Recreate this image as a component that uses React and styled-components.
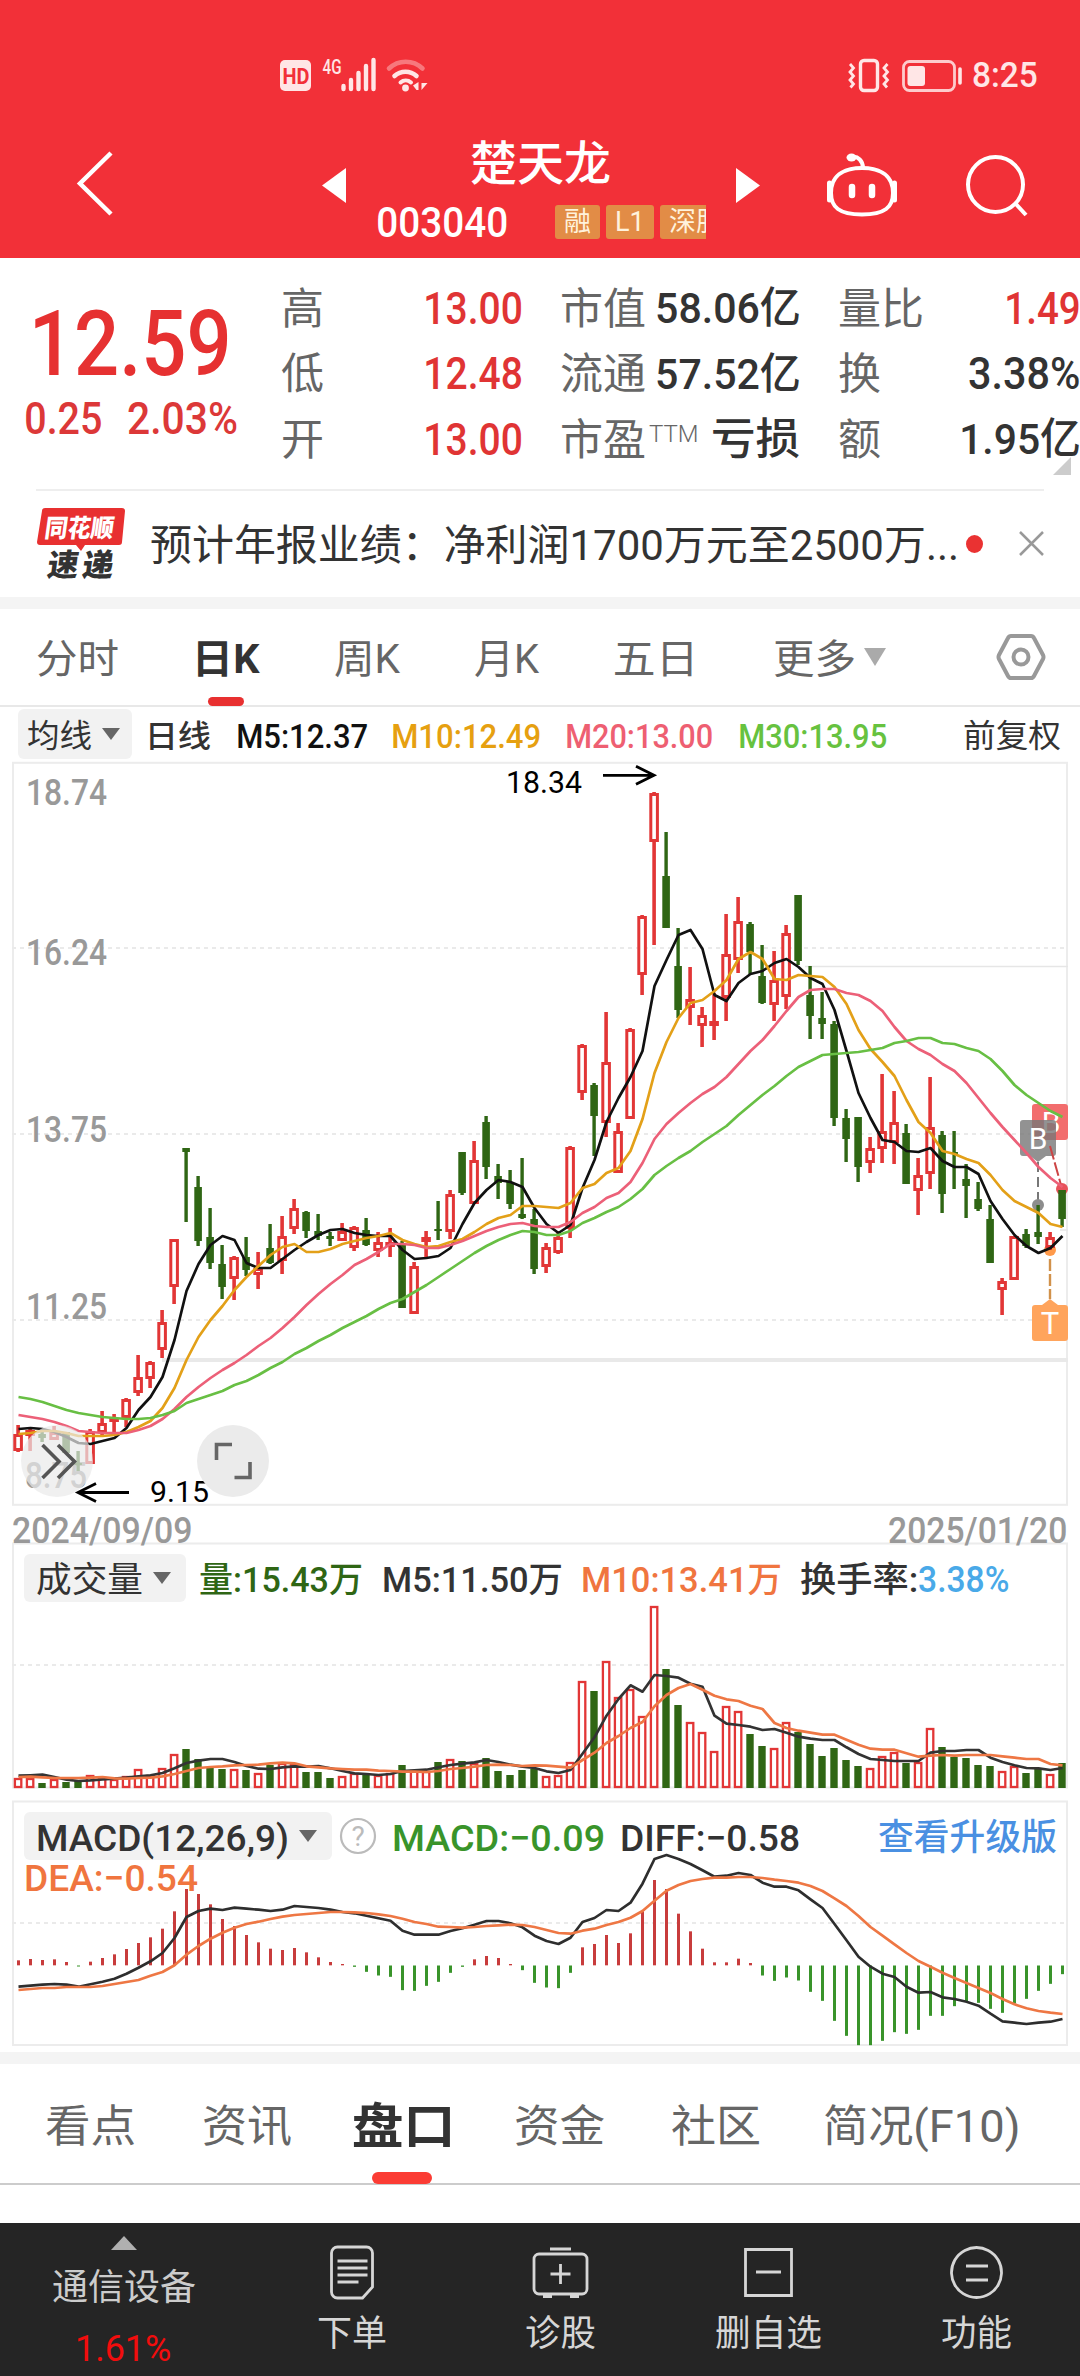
import React, { useLayoutEffect, useState } from "react";
import styled, { createGlobalStyle, css } from "styled-components";

const SANS = `Roboto, "Noto Sans CJK SC", sans-serif`;

const Global = createGlobalStyle`
  * { box-sizing: border-box; }
  body { margin: 0; background: #fff; font-family: ${SANS}; color: #333; }
  svg { display: block; flex: none; overflow: visible; }
`;

/* ---------- text that is fitted to an exact ink width ---------- */

const FitBox = styled.span`
  display: block;
  flex: none;
  width: ${(p) => p.$w}px;
  height: ${(p) => p.$size}px;
  line-height: ${(p) => p.$size}px;
  margin-left: ${(p) => p.$ml || 0}px;
  margin-top: ${(p) => p.$mt || 0}px;
  font-size: ${(p) => p.$size}px;
  font-weight: ${(p) => p.$weight || 400};
  color: ${(p) => p.$color || "inherit"};
  white-space: nowrap;
`;
const FitInner = styled.span`
  display: inline-block;
  transform-origin: 0 50%;
`;

function Fit({ w, size, weight = 400, color, ml, mt, dy = 1.5, children }) {
  const [m, setM] = useState({ scale: 1, shift: 0 });
  useLayoutEffect(() => {
    const ctx = document.createElement("canvas").getContext("2d");
    ctx.font = `${weight} ${size}px ${SANS}`;
    const t = ctx.measureText(children);
    const ink = t.actualBoundingBoxLeft + t.actualBoundingBoxRight;
    const scale = w / ink;
    setM({ scale, shift: t.actualBoundingBoxLeft * scale });
  }, [w, size, weight, children]);
  return (
    <FitBox $w={w} $size={size} $weight={weight} $color={color} $ml={ml} $mt={mt}>
      <FitInner style={{ transform: `translate(${m.shift}px, ${dy}px) scaleX(${m.scale})` }}>{children}</FitInner>
    </FitBox>
  );
}

/* ---------- header ---------- */

const Screen = styled.main`
  width: 1080px;
  height: 2376px;
  overflow: hidden;
  display: flex;
  flex-direction: column;
  background: #fff;
`;
const Header = styled.header`
  flex: none;
  height: 258px;
  background: #f23038;
  color: #fff;
  display: flex;
  flex-direction: column;
`;
const StatusBar = styled.div`
  height: 92px;
  padding: 58px 43px 0 280px;
  display: flex;
  color: #ffe6e6;
`;
const StatusGroup = styled.div`
  display: flex;
  align-items: flex-start;
  margin-left: ${(p) => (p.$end ? "auto" : 0)};
`;
const TitleBar = styled.div`
  flex: 1;
  display: flex;
  padding-left: 77px;
`;
const TitleIcon = styled.div`
  margin-left: ${(p) => p.$ml || 0}px;
  padding-top: ${(p) => p.$pt}px;
`;
const TitleCenter = styled.div`
  width: 390px;
  display: flex;
  flex-direction: column;
`;
const NameRow = styled.div`
  height: 88px;
  padding: 46px 0 0 125px;
  display: flex;
`;
const CodeRow = styled.div`
  display: flex;
  padding-left: 32px;
  height: 80px;
  padding-top: 20px;
`;
const Badges = styled.div`
  display: flex;
  gap: 6px;
  margin-left: 48px;
  margin-top: 5px;
  width: 151px;
  height: 34px;
  overflow: hidden;
`;
const Badge = styled.span`
  flex: none;
  width: ${(p) => p.$w}px;
  height: 34px;
  padding-left: 9px;
  border-radius: 3px;
  background: #e28c46;
  color: #fff2dc;
  font-size: 27px;
  line-height: 34px;
  white-space: nowrap;
`;

function StatusIcons() {
  return (
    <StatusGroup>
      <svg width="148" height="34" viewBox="280 58 148 34">
        <rect x="280" y="60" width="31" height="31" rx="5" fill="#ffe6e6" />
        <text x="282.500" y="84" fontSize="22" fontWeight="700" textLength="27" lengthAdjust="spacingAndGlyphs" fill="#f23038">HD</text>
        <text x="322.500" y="73.500" fontSize="21" fontWeight="500" textLength="19" lengthAdjust="spacingAndGlyphs" fill="#ffe6e6">4G</text>
        <g stroke="#ffe6e6" strokeWidth="4.4" strokeLinecap="round">
          <path d="M343.5 86v3M351 80v9M358.500 73v16M366 66v23M373.500 60v29" />
        </g>
        <g fill="none" strokeWidth="4.600" strokeLinecap="round" stroke="#ffe6e6">
          <path d="M389 68.500a24 24 0 0 1 33.500 0" opacity=".4" />
          <path d="M394.500 76a16.500 16.500 0 0 1 22 0" />
          <path d="M400.500 82.500a8 8 0 0 1 10.500 0" strokeWidth="4" />
        </g>
        <circle cx="405.500" cy="88" r="3.400" fill="#ffe6e6" />
        <path d="M418.500 82v8h-2l-3.500-4.500zM421.500 90v-7h6z" fill="#ffe6e6" />
      </svg>
    </StatusGroup>
  );
}

function StatusRight() {
  return (
    <StatusGroup $end>
      <svg width="116" height="34" viewBox="847 58 116 34" fill="none" stroke="#ffe6e6">
        <rect x="860.500" y="60.500" width="17" height="30" rx="3.500" strokeWidth="3.400" />
        <path d="M850 64l3.500 4-3.500 4 3.500 4-3.500 4 3.500 4-3 3.500M887.500 64l-3.500 4 3.500 4-3.500 4 3.500 4-3.500 4 3 3.500" strokeWidth="2.800" />
        <rect x="903.500" y="61.500" width="51" height="29" rx="6" strokeWidth="2.800" opacity=".85" />
        <rect x="907.500" y="66" width="17.500" height="20" rx="3" fill="#ffe6e6" stroke="none" />
        <path d="M960 69v14" strokeWidth="3.600" strokeLinecap="round" />
      </svg>
      <Fit w={64} size={35} weight={500} ml={10} dy={0}>8:25</Fit>
    </StatusGroup>
  );
}

/* ---------- quote ---------- */

const Quote = styled.section`
  flex: none;
  height: 231px;
  display: flex;
`;
const PriceBlock = styled.div`
  flex: none;
  width: 281px;
  padding: 40px 0 0 26px;
`;
const ChangeRow = styled.div`
  display: flex;
  padding-top: 8px;
`;
const StatColumn = styled.div`
  width: ${(p) => p.$w}px;
  margin-right: 39px;
  padding-top: 16px;
  flex: none;
`;
const Stat = styled.div`
  height: 65.5px;
  display: flex;
  align-items: center;
  justify-content: space-between;
  color: #333;
`;
const StatLabel = styled.span`
  display: flex;
  align-items: flex-start;
  padding-top: 4px;
  font-size: 43px;
  line-height: 62px;
  color: #666;
  white-space: nowrap;
`;
const Sup = styled.span`
  font-size: 24px;
  line-height: 24px;
  margin: 13px 0 0 3px;
  font-weight: 300;
`;
const QuoteEnd = styled.div`
  position: relative;
  flex: none;
  width: 242px;
`;
const Corner = styled.i`
  position: absolute;
  right: 9px;
  top: 199px;
  width: 18px;
  height: 18px;
  background: #ccc;
  clip-path: polygon(100% 0, 100% 100%, 0 100%);
`;

/* ---------- news ---------- */

const News = styled.section`
  flex: none;
  height: 108px;
  margin: 0 36px;
  border-top: 2px solid #eee;
  display: flex;
  align-items: center;
`;
const Dot = styled.i`
  width: 18px;
  height: 18px;
  border-radius: 50%;
  background: #ea3232;
  margin: 0 36px 0 10px;
`;
const Band = styled.div`
  flex: none;
  height: 12px;
  background: #f4f4f4;
`;

/* ---------- tabs ---------- */

const Tabs = styled.nav`
  flex: none;
  height: ${(p) => p.$h}px;
  display: flex;
  padding-left: ${(p) => p.$pl}px;
  border-bottom: 2px solid ${(p) => p.$line};
  color: #666;
`;
const Tab = styled.div`
  position: relative;
  width: ${(p) => p.$w}px;
  flex: none;
  margin-right: ${(p) => p.$gap}px;
  display: flex;
  align-items: center;
  ${(p) =>
    p.$bar &&
    css`
      color: #333;
      &::after {
        content: "";
        position: absolute;
        left: ${p.$bar[3]}px;
        bottom: -1px;
        width: ${p.$bar[0]}px;
        height: ${p.$bar[1]}px;
        border-radius: ${p.$bar[1] / 2}px;
        background: ${p.$bar[2]};
      }
    `}
`;
const Caret = styled.i`
  flex: none;
  width: ${(p) => p.$w}px;
  height: ${(p) => p.$h}px;
  margin-left: ${(p) => p.$ml}px;
  background: ${(p) => p.$color || "#666"};
  clip-path: polygon(0 0, 100% 0, 50% 100%);
`;

/* ---------- indicators ---------- */

const IndicatorRow = styled.div`
  flex: none;
  height: ${(p) => p.$h}px;
  padding: ${(p) => p.$pad};
  display: flex;
  align-items: center;
  z-index: 1;
`;
const Chip = styled.div`
  flex: none;
  width: ${(p) => p.$w}px;
  height: ${(p) => p.$h}px;
  padding-left: ${(p) => p.$pl}px;
  border-radius: 6px;
  background: #f2f2f2;
  display: flex;
  align-items: center;
`;
const Spacer = styled.i`
  flex: 1;
`;
const Pane = styled.section`
  flex: none;
  height: ${(p) => p.$h}px;
  display: grid;
  grid-template: 1fr / 1fr;
  > * { grid-area: 1 / 1; }
`;
const Overlay = styled.div`
  z-index: 1;
`;
const Dates = styled.div`
  flex: none;
  height: 37px;
  display: flex;
  justify-content: space-between;
  align-items: center;
  padding: 11px 14px 0 13px;
  color: #999;
`;

/* ---------- chart data ---------- */

const RED = "#e23636";
const GREEN = "#2f6614";
const xAt = (i) => 18 + 12 * i;

// kind, high, body top, body bottom, low
const CANDLES = [
  ["r",1425,1434,1450,1452],["r",1427,1430,1435,1451],["g",1432,1434,1438,1442],["r",1426,1432,1439,1439],
  ["g",1432,1432,1453,1453],["g",1451,1463,1465,1471],["r",1429,1431,1463,1464],["r",1411,1423,1432,1436],
  ["r",1414,1418,1421,1433],["r",1398,1399,1417,1427],["r",1355,1377,1392,1396],["r",1361,1362,1378,1388],
  ["r",1310,1322,1349,1358],["r",1239,1239,1286,1304],["g",1148,1148,1152,1222],["g",1176,1187,1241,1246],
  ["g",1208,1237,1263,1269],["g",1245,1264,1287,1299],["r",1256,1257,1278,1300],["g",1237,1257,1270,1276],
  ["r",1252,1268,1274,1289],["g",1224,1248,1263,1264],["r",1216,1236,1260,1274],["r",1199,1208,1228,1234],
  ["g",1211,1212,1231,1238],["g",1214,1231,1236,1240],["g",1232,1236,1239,1246],["r",1223,1231,1240,1241],
  ["r",1226,1227,1247,1251],["g",1218,1230,1245,1246],["r",1232,1242,1250,1257],["r",1228,1242,1246,1257],
  ["g",1241,1243,1308,1308],["r",1262,1266,1313,1314],["r",1231,1237,1241,1259],["g",1201,1229,1230,1240],
  ["r",1190,1194,1231,1239],["g",1152,1152,1193,1195],["r",1141,1160,1203,1203],["g",1116,1122,1167,1179],
  ["g",1164,1176,1183,1199],["g",1170,1182,1204,1209],["g",1158,1214,1218,1219],["g",1209,1219,1269,1274],
  ["r",1243,1247,1266,1273],["r",1231,1237,1252,1254],["r",1146,1147,1228,1238],["r",1044,1045,1092,1100],
  ["g",1083,1085,1116,1156],["r",1012,1062,1122,1137],["r",1123,1131,1172,1172],["r",1028,1029,1118,1118],
  ["r",915,916,974,995],["r",792,793,841,945],["g",832,876,928,928],["g",928,966,1010,1018],
  ["r",967,999,1007,1025],["r",1007,1015,1025,1047],["r",993,1021,1025,1040],["r",914,954,997,1021],
  ["r",897,921,959,973],["g",922,924,952,974],["g",945,976,1003,1004],["r",951,980,1004,1021],
  ["r",925,933,996,1009],["g",895,895,961,965],["g",966,995,1016,1039],["g",992,1018,1024,1039],
  ["g",1021,1024,1118,1126],["g",1109,1118,1139,1162],["g",1117,1117,1167,1182],["r",1137,1148,1162,1173],
  ["r",1074,1131,1148,1163],["r",1091,1122,1142,1164],["g",1124,1133,1184,1184],["r",1158,1175,1190,1215],
  ["r",1077,1127,1173,1189],["g",1131,1135,1194,1213],["g",1131,1152,1154,1189],["g",1164,1179,1186,1218],
  ["g",1182,1199,1209,1211],["g",1205,1219,1263,1263],["r",1278,1281,1289,1315],["r",1236,1236,1279,1280],
  ["g",1229,1234,1246,1248],["g",1205,1232,1237,1244],["r",1232,1237,1247,1250],["g",1190,1190,1219,1227],
];

const MA5 = [1429,1428,1429,1432,1437,1443,1444,1441,1438,1428,1410,1397,1377,1340,1291,1264,1245,1236,1240,1263,1268,1268,1259,1250,1242,1235,1230,1229,1233,1235,1236,1236,1250,1259,1258,1256,1248,1224,1203,1190,1180,1182,1187,1208,1224,1233,1225,1188,1160,1122,1098,1077,1051,986,960,935,930,949,995,1001,983,974,971,963,959,967,978,984,1010,1051,1093,1118,1140,1142,1151,1152,1148,1161,1167,1167,1174,1201,1219,1235,1246,1253,1248,1236];
const MA10 = [1434,1433,1431,1431,1433,1436,1436,1436,1435,1432,1427,1421,1408,1388,1360,1337,1320,1306,1290,1277,1266,1255,1247,1244,1252,1252,1249,1244,1241,1238,1236,1233,1240,1244,1247,1246,1242,1239,1232,1224,1218,1215,1206,1206,1207,1208,1203,1188,1184,1173,1168,1151,1119,1073,1042,1018,1003,1000,991,980,959,952,959,979,980,975,976,977,987,1004,1030,1049,1062,1076,1100,1122,1133,1151,1154,1159,1163,1175,1190,1201,1207,1213,1224,1227];
const MA20 = [1415,1417,1419,1422,1426,1431,1432,1433,1433,1433,1430,1426,1419,1409,1397,1387,1378,1370,1363,1355,1346,1338,1328,1317,1305,1294,1284,1275,1265,1259,1252,1244,1244,1245,1248,1248,1245,1241,1236,1231,1227,1224,1223,1226,1227,1227,1222,1213,1207,1198,1193,1182,1163,1139,1124,1113,1103,1094,1087,1077,1064,1051,1040,1026,1011,997,990,989,989,993,995,1001,1011,1027,1041,1049,1055,1064,1071,1083,1098,1113,1127,1140,1153,1167,1178,1187];
const MA30 = [1397,1399,1402,1406,1410,1413,1415,1417,1418,1419,1419,1418,1415,1411,1403,1399,1395,1391,1385,1381,1375,1368,1362,1354,1348,1341,1335,1328,1322,1316,1309,1303,1299,1292,1285,1277,1269,1261,1253,1246,1240,1235,1231,1232,1235,1235,1231,1223,1218,1212,1207,1199,1189,1175,1166,1158,1151,1142,1134,1126,1115,1105,1095,1086,1076,1067,1061,1055,1054,1053,1052,1050,1048,1043,1041,1038,1038,1043,1044,1048,1051,1059,1071,1085,1095,1103,1111,1117];

const VOLUME = [9,9,5,8,6,7,12,10,8,11,18,12,19,33,39,29,21,19,18,18,14,23,24,23,16,16,10,11,14,13,12,14,23,17,16,26,28,27,24,30,17,13,18,19,11,12,25,106,97,126,90,98,71,181,119,83,65,55,36,81,76,54,42,39,65,56,44,32,40,28,22,19,31,35,25,25,59,41,31,30,23,22,16,21,15,19,13,25];

// The series below are held in thirds of a pixel.
const VOL5 = [707,706,704,711,719,723,721,718,716,713,709,706,699,685,669,662,657,657,666,678,686,687,682,679,680,678,685,693,700,702,705,702,693,691,689,682,675,671,667,660,666,674,680,684,694,699,690,641,592,527,477,436,455,405,408,413,431,440,527,551,555,560,570,567,578,590,596,600,600,622,642,657,660,663,663,663,638,633,633,630,630,653,666,676,684,685,690,684];
const VOL10 = [711,710,712,714,714,714,713,711,715,716,714,713,709,702,693,684,681,679,676,675,674,670,668,670,679,682,685,687,689,689,692,693,695,695,696,693,687,684,680,675,674,675,678,676,677,680,683,660,638,609,588,564,546,499,465,444,432,449,467,478,483,497,507,549,564,572,578,584,584,599,614,626,629,629,640,650,647,645,647,645,645,645,649,653,657,657,672,676];
const MACD = [511,507,510,508,516,529,515,504,493,477,459,442,416,364,297,312,343,387,408,435,457,476,480,474,487,502,516,522,530,545,556,560,600,602,587,575,548,530,508,498,504,522,540,578,592,594,548,472,462,435,459,430,364,270,297,371,424,476,517,517,506,519,556,572,562,571,605,632,692,737,765,765,752,726,731,719,677,677,648,634,638,656,668,640,626,602,581,552];
const DIFF = [590,587,584,582,584,590,583,575,566,551,533,514,489,444,381,363,356,360,353,356,359,363,359,348,351,354,359,366,370,377,385,392,422,434,434,434,423,415,404,393,393,400,412,437,453,462,443,396,384,360,363,338,281,207,195,207,222,241,260,257,249,255,278,290,290,301,328,354,402,451,500,530,551,561,590,608,606,622,627,635,647,671,694,698,702,698,695,687];
const DEA = [600,597,594,594,591,591,591,588,582,576,570,557,546,526,494,468,446,428,413,402,395,387,380,375,372,369,366,366,367,369,373,378,386,396,402,410,411,413,411,408,406,404,405,411,420,429,431,422,416,405,396,383,363,332,302,285,273,267,263,263,261,261,264,269,273,278,288,303,325,348,378,411,437,463,489,513,530,548,564,579,594,609,627,643,655,663,668,672];

function Line({ data, color, scale = 1, width = 2.7 }) {
  return (
    <polyline
      points={data.map((v, i) => `${xAt(i) + 0.5},${(v * scale).toFixed(1)}`).join(" ")}
      fill="none"
      stroke={color}
      strokeWidth={width}
      strokeLinejoin="round"
    />
  );
}

function Dashes({ y }) {
  return <path d={`M12 ${y}H1067`} stroke="#eaeaea" strokeWidth="2" strokeDasharray="4 4" />;
}

function AxisLabel({ x, y, w, children, size = 36, color = "#999", weight = 500 }) {
  return (
    <text x={x} y={y} fontSize={size} fontWeight={weight} fill={color} textLength={w} lengthAdjust="spacingAndGlyphs">
      {children}
    </text>
  );
}

function Candle({ i, c }) {
  const [kind, hi, top, bot, lo] = c;
  const x = xAt(i);
  if (kind === "g") {
    return (
      <g fill={GREEN}>
        <rect x={x - 1.6} y={hi} width="3.4" height={lo - hi} />
        <rect x={x - 3.7} y={top} width="7.6" height={Math.max(2, bot - top)} />
      </g>
    );
  }
  return (
    <g>
      <rect x={x - 1.7} y={hi} width="3.6" height={lo - hi} fill={RED} />
      <rect x={x - 3.2} y={top + 1.5} width="6.600" height={Math.max(1, bot - top - 2)} fill="#fff" stroke={RED} strokeWidth="3" />
    </g>
  );
}

function PriceChart() {
  return (
    <svg width="1080" height="745" viewBox="0 761 1080 745">
      <rect x="13" y="762.800" width="1054" height="742" fill="none" stroke="#ececec" strokeWidth="2" />
      <Dashes y={948} />
      <Dashes y={1134} />
      <Dashes y={1320} />
      <path d="M162 1360H1068" stroke="#e9e9e9" strokeWidth="4" />
      <path d="M805 966.500H1068M1060 1230h8" stroke="#e6e6e6" strokeWidth="1.500" />
      <AxisLabel x={26} y={805} w={81}>18.74</AxisLabel>
      <AxisLabel x={26} y={965} w={81}>16.24</AxisLabel>
      <AxisLabel x={26} y={1142} w={81}>13.75</AxisLabel>
      <AxisLabel x={26} y={1319} w={81}>11.25</AxisLabel>
      <AxisLabel x={25} y={1488} w={62}>8.75</AxisLabel>
      <AxisLabel x={506} y={793} w={76} size={31} color="#000" weight={400}>18.34</AxisLabel>
      <AxisLabel x={150} y={1502} w={59} size={30} color="#000" weight={400}>9.15</AxisLabel>
      <path d="M603 775.300H653M636 766.300l18 9-18 9M129 1492.500H79M96 1483.500l-18 9 18 9" fill="none" stroke="#000" strokeWidth="2.800" />
      <g>
        <rect x="1032" y="1104" width="36" height="36" rx="3" fill="#f26d6d" />
        <text x="1051" y="1133" fontSize="30" fill="#fff" textAnchor="middle">B</text>
        <path d="M1023 1120h30a3 3 0 0 1 3 3v30a3 3 0 0 1-3 3h-7l-8 6-8-6h-7a3 3 0 0 1-3-3v-30a3 3 0 0 1 3-3z" fill="#777" fillOpacity=".8" />
        <text x="1038" y="1149" fontSize="30" fill="#fff" textAnchor="middle">B</text>
        <path d="M1038 1162V1200" stroke="#777" strokeWidth="2" strokeDasharray="10 5" />
        <path d="M1050 1146L1061 1185" stroke="#c44" strokeWidth="2" strokeDasharray="14 3" />
        <circle cx="1038" cy="1205" r="6" fill="#8d8d8d" />
        <circle cx="1062" cy="1189" r="6" fill="#e8525a" />
        <path d="M1050 1259V1299" stroke="#d1914a" strokeWidth="2.400" strokeDasharray="12 3" />
        <circle cx="1050" cy="1250" r="6" fill="#ff9a4a" />
        <path d="M1035 1305h7l8-6 8 6h7a3 3 0 0 1 3 3v30a3 3 0 0 1-3 3h-30a3 3 0 0 1-3-3v-30a3 3 0 0 1 3-3z" fill="#ffa45c" />
        <text x="1050" y="1334" fontSize="31" fill="#fff" textAnchor="middle">T</text>
      </g>
      {CANDLES.map((c, i) => <Candle key={i} i={i} c={c} />)}
      <Line data={MA5} color="#111" />
      <Line data={MA10} color="#e3a018" />
      <Line data={MA20} color="#ec6078" />
      <Line data={MA30} color="#68bf44" />
      <circle cx="57" cy="1461" r="36" fill="#eaeaea" fillOpacity=".7" />
      <circle cx="233" cy="1461" r="36" fill="#ebebeb" />
      <g fill="none" stroke="#555" strokeWidth="3.600">
        <path d="M42.500 1445l16.500 16.500-16.500 16.500M58 1445l16.500 16.500-16.500 16.500" />
        <path d="M216.500 1460v-15.500h15.500M250 1462v15.500h-15.500" stroke="#666" />
      </g>
    </svg>
  );
}

function VolumeChart() {
  return (
    <svg width="1080" height="258" viewBox="0 1543 1080 258">
      <path d="M12 1543.500H1068M13 1543V1788M1067 1543V1788M12 1787.500H1068" fill="none" stroke="#ececec" strokeWidth="2" />
      <Dashes y={1665} />
      {VOLUME.map((h, i) =>
        CANDLES[i][0] === "g" ? (
          <rect key={i} x={xAt(i) - 3.700} y={1788 - h} width="7.400" height={h} fill={GREEN} />
        ) : (
          <rect key={i} x={xAt(i) - 3.100} y={1788 - h} width="6.400" height={h - 1} fill="#fff" stroke={RED} strokeWidth="2.300" />
        )
      )}
      <g transform="translate(0 1540)">
        <Line data={VOL5} color="#333" scale={1 / 3} />
        <Line data={VOL10} color="#ee7744" scale={1 / 3} />
      </g>
    </svg>
  );
}

function MacdChart() {
  return (
    <svg width="1080" height="251" viewBox="0 1801 1080 251">
      <rect x="13" y="1801.500" width="1054" height="243.500" fill="none" stroke="#ececec" strokeWidth="2" />
      <Dashes y={1923} />
      <g transform="translate(0 1790)">
        {MACD.map((v, i) => {
          const up = v < 525;
          return (
            <rect
              key={i}
              x={xAt(i) - 1}
              y={up ? v / 3 : 175.500}
              width="3"
              height={Math.max(1, Math.abs(v - 526) / 3)}
              fill={up ? "#c83c3c" : "#39942a"}
            />
          );
        })}
        <Line data={DIFF} color="#2e2e2e" scale={1 / 3} />
        <Line data={DEA} color="#ee7744" scale={1 / 3} />
      </g>
    </svg>
  );
}

/* ---------- bottom bar ---------- */

const BottomBar = styled.footer`
  flex: none;
  height: 153px;
  background: #252525;
  color: #ccc;
  display: flex;
`;
const Sector = styled.div`
  width: 248px;
  display: flex;
  flex-direction: column;
  align-items: center;
  padding-top: 13px;
`;
const UpMark = styled.i`
  width: 26px;
  height: 14px;
  background: #b0b0b0;
  clip-path: polygon(50% 0, 100% 100%, 0 100%);
`;
const Action = styled.div`
  width: 208px;
  display: flex;
  flex-direction: column;
  align-items: center;
  padding-top: 20px;
  color: #d6d6d6;
`;
const ActionGrid = styled.div`
  display: flex;
`;

const ACTIONS = [
  { label: "下单", w: 68, icon: <path d="M10 3h29a6 6 0 0 1 6 6v34l-10 11H10a6 6 0 0 1-6-6V9a6 6 0 0 1 6-6zM10 17h30M10 24h30M10 31h30M10 38h21" transform="translate(3.500 1)" /> },
  { label: "诊股", w: 69, icon: <path d="M7 11h43a5 5 0 0 1 5 5v30a5 5 0 0 1-5 5H7a5 5 0 0 1-5-5V16a5 5 0 0 1 5-5zM18 6h21M28.500 21v20M18.500 31h20M11 53.500h9M38 53.500h9" /> },
  { label: "删自选", w: 105, icon: <path d="M5.500 6.500h46v46h-46zM16 29h25" /> },
  { label: "功能", w: 69, icon: <path d="M28.500 4.500a25 25 0 1 0 .01 0zM18 23h22M18 37h22" /> },
];

const MAIN_TABS = [
  ["看点", 88, 70], ["资讯", 87, 63], ["盘口", 96, 66], ["资金", 88, 68], ["社区", 87, 66], ["简况(F10)", 193, 0],
];
const K_TABS = [
  ["分时", 81, 80], ["日K", 62, 75], ["周K", 66, 74], ["月K", 65, 75], ["五日", 77, 82],
];

export default function App() {
  return (
    <Screen>
      <Global />
      <Header>
        <StatusBar>
          <StatusIcons />
          <StatusRight />
        </StatusBar>
        <TitleBar>
          <TitleIcon $pt={59}>
            <svg width="38" height="66" viewBox="0 0 38 66" fill="none" stroke="#fff" strokeWidth="4.500"><path d="M34 2L3 32.500 34 63" /></svg>
          </TitleIcon>
          <TitleIcon $ml={207} $pt={76}>
            <svg width="24" height="35" fill="#fff"><path d="M24 0v35L0 17.500z" /></svg>
          </TitleIcon>
          <TitleCenter>
            <NameRow><Fit w={139} size={47} weight={500}>楚天龙</Fit></NameRow>
            <CodeRow>
              <Fit w={129} size={43} weight={500} mt={1} dy={0}>003040</Fit>
              <Badges>
                <Badge $w={45}>融</Badge>
                <Badge $w={48}>L1</Badge>
                <Badge $w={80}>深股通</Badge>
              </Badges>
            </CodeRow>
          </TitleCenter>
          <TitleIcon $pt={76}>
            <svg width="24" height="35" fill="#fff"><path d="M0 0v35L24 17.500z" /></svg>
          </TitleIcon>
          <TitleIcon $ml={65} $pt={60}>
            <svg width="74" height="66" viewBox="824 152 74 66" fill="none" stroke="#fff" strokeWidth="4">
              <path d="M861 168c13 0 31 4 31 25 0 14-8 21.500-31 21.500S830 207 830 193c0-21 18-25 31-25z" />
              <path d="M828.500 183v17M893.500 183v17" strokeWidth="5" strokeLinecap="round" />
              <path d="M851 157c6-1 11 4 11 11" />
              <ellipse cx="850.500" cy="157.500" rx="5" ry="4" fill="#fff" stroke="none" />
              <path d="M851 187v8M871 187v8" strokeWidth="6.500" strokeLinecap="round" />
            </svg>
          </TitleIcon>
          <TitleIcon $ml={64} $pt={60}>
            <svg width="66" height="66" viewBox="962 152 66 66" fill="none" stroke="#fff" strokeWidth="4"><circle cx="994.500" cy="184.500" r="27.500" /><path d="M1014 203l11 12" /></svg>
          </TitleIcon>
        </TitleBar>
      </Header>

      <Quote>
        <PriceBlock>
          <Fit w={192} size={90} weight={500} color="#e63131" ml={9}>12.59</Fit>
          <ChangeRow>
            <Fit w={75} size={45} color="#dc3838" weight={500} dy={0}>0.25</Fit>
            <Fit w={109} size={45} color="#dc3838" weight={500} ml={27} dy={0}>2.03%</Fit>
          </ChangeRow>
        </PriceBlock>
        <StatColumn $w={240}>
          <Stat><StatLabel>高</StatLabel><Fit w={95} size={44} weight={500} color="#e03434">13.00</Fit></Stat>
          <Stat><StatLabel>低</StatLabel><Fit w={95} size={44} weight={500} color="#e03434">12.48</Fit></Stat>
          <Stat><StatLabel>开</StatLabel><Fit w={95} size={44} weight={500} color="#e03434">13.00</Fit></Stat>
        </StatColumn>
        <StatColumn $w={239}>
          <Stat><StatLabel>市值</StatLabel><Fit w={142} size={43} weight={500}>58.06亿</Fit></Stat>
          <Stat><StatLabel>流通</StatLabel><Fit w={142} size={43} weight={500}>57.52亿</Fit></Stat>
          <Stat><StatLabel>市盈<Sup>TTM</Sup></StatLabel><Fit w={86} size={43} weight={500}>亏损</Fit></Stat>
        </StatColumn>
        <QuoteEnd>
          <StatColumn $w={241}>
            <Stat><StatLabel>量比</StatLabel><Fit w={72} size={44} weight={500} color="#e03434">1.49</Fit></Stat>
            <Stat><StatLabel>换</StatLabel><Fit w={110} size={44} weight={500}>3.38%</Fit></Stat>
            <Stat><StatLabel>额</StatLabel><Fit w={117} size={43} weight={500}>1.95亿</Fit></Stat>
          </StatColumn>
          <Corner />
        </QuoteEnd>
      </Quote>

      <News>
        <svg width="92" height="76" viewBox="36 505 92 76">
          <path d="M45 507h77q3 0 3 3l-3 31q0 3-3 3H85l-4 6-5-6H40q-3 0-3-3l5-31q0-3 3-3z" fill="#e83030" />
          <g transform="skewX(-8)" fontFamily='"Noto Sans CJK SC"' fontWeight="900">
            <text x="119" y="536" fontSize="25" textLength="69" lengthAdjust="spacingAndGlyphs" fill="#fff">同花顺</text>
            <text x="127" y="575" fontSize="31" textLength="66" fill="#333">速递</text>
          </g>
        </svg>
        <Fit w={805} size={42} ml={23}>预计年报业绩：净利润1700万元至2500万...</Fit>
        <Dot />
        <svg width="25" height="25" stroke="#999" strokeWidth="2.500"><path d="M1 0l23 23M24 0L1 23" /></svg>
      </News>
      <Band />

      <Tabs $h={98} $pl={37} $line="#e8e8e8">
        {K_TABS.map(([t, w, gap], i) => (
          <Tab key={t} $w={w} $gap={gap} $bar={i === 1 && [36, 9, "#e83030", 10]}>
            <Fit w={w} size={40} weight={i === 1 ? 700 : 400} dy={2.5}>{t}</Fit>
          </Tab>
        ))}
        <Tab $w={112} $gap={110}>
          <Fit w={80} size={40} dy={2.5}>更多</Fit>
          <Caret $w={22} $h={18} $ml={10} $color="#aaa" />
        </Tab>
        <Tab $w={50} $gap={0}>
          <svg width="50" height="48" fill="none" stroke="#999" strokeWidth="4"><path d="M15 3h20q2 0 3 2l9 17q1 2 0 4l-9 17q-1 2-3 2H15q-2 0-3-2L3 26q-1-2 0-4l9-17q1-2 3-2z" /><circle cx="25" cy="24" r="7.500" /></svg>
        </Tab>
      </Tabs>

      <IndicatorRow $h={54} $pad="0 20px 0 18px">
        <Chip $w={114} $h={50} $pl={10}>
          <Fit w={63} size={32}>均线</Fit>
          <Caret $w={18} $h={12} $ml={11} />
        </Chip>
        <Fit w={60} size={31} ml={18} weight={500}>日线</Fit>
        <Fit w={129} size={34} ml={28} color="#111" weight={500}>M5:12.37</Fit>
        <Fit w={147} size={34} ml={26} color="#e6a010" weight={500}>M10:12.49</Fit>
        <Fit w={145} size={34} ml={27} color="#ee5f72" weight={500}>M20:13.00</Fit>
        <Fit w={146} size={34} ml={28} color="#67c23f" weight={500}>M30:13.95</Fit>
        <Spacer />
        <Fit w={96} size={32}>前复权</Fit>
      </IndicatorRow>

      <Pane $h={745}><PriceChart /></Pane>
      <Dates>
        <Fit w={178} size={36} weight={500} dy={0.5}>2024/09/09</Fit>
        <Fit w={177} size={36} weight={500} dy={0.5}>2025/01/20</Fit>
      </Dates>

      <Pane $h={258}>
        <VolumeChart />
        <IndicatorRow $h={70} $pad="0 24px">
          <Chip $w={162} $h={48} $pl={13}>
            <Fit w={105} size={35}>成交量</Fit>
            <Caret $w={18} $h={12} $ml={11} />
          </Chip>
          <Fit w={161} size={35} ml={14} weight={500} color={GREEN}>量:15.43万</Fit>
          <Fit w={177} size={35} ml={23} weight={500}>M5:11.50万</Fit>
          <Fit w={197} size={35} ml={22} weight={500} color="#f0753f">M10:13.41万</Fit>
          <Fit w={115} size={35} ml={21} weight={500}>换手率:</Fit>
          <Fit w={89} size={36} ml={3} weight={500} color="#49a9e8">3.38%</Fit>
        </IndicatorRow>
      </Pane>

      <Pane $h={251}>
        <MacdChart />
        <Overlay>
          <IndicatorRow $h={70} $pad="0 24px">
            <Chip $w={308} $h={48} $pl={14}>
              <Fit w={249} size={37} weight={500}>MACD(12,26,9)</Fit>
              <Caret $w={18} $h={12} $ml={12} />
            </Chip>
            <TitleIcon $ml={8} $pt={0}>
              <svg width="36" height="36"><circle cx="18" cy="18" r="17" fill="none" stroke="#bbb" strokeWidth="2.200" /><text x="18" y="28" fontSize="28" textAnchor="middle" fill="#bbb">?</text></svg>
            </TitleIcon>
            <Fit w={209} size={37} ml={18} weight={500} color="#39942a">MACD:−0.09</Fit>
            <Fit w={177} size={37} ml={19} weight={500}>DIFF:−0.58</Fit>
            <Spacer />
            <Fit w={177} size={36} color="#4a90e2" weight={500}>查看升级版</Fit>
          </IndicatorRow>
          <Fit w={172} size={37} ml={26} mt={-13} weight={500} color="#f0753f">DEA:−0.54</Fit>
        </Overlay>
      </Pane>
      <Band />

      <Tabs $h={121} $pl={46} $line="#ccc">
        {MAIN_TABS.map(([t, w, gap], i) => (
          <Tab key={t} $w={w} $gap={gap} $bar={i === 2 && [60, 12, "#fb3c34", 18]}>
            <Fit w={w} size={i === 2 ? 48 : 44} weight={i === 2 ? 700 : 400} dy={3}>{t}</Fit>
          </Tab>
        ))}
      </Tabs>
      <Spacer />

      <BottomBar>
        <Sector>
          <UpMark />
          <Fit w={143} size={36} mt={18} dy={2}>通信设备</Fit>
          <Fit w={92} size={36} mt={25} color="#f20d0d">1.61%</Fit>
        </Sector>
        <ActionGrid>
          {ACTIONS.map((a) => (
            <Action key={a.label}>
              <svg width="57" height="60" viewBox="0 0 57 60" fill="none" stroke="#d6d6d6" strokeWidth="2.800">{a.icon}</svg>
              <Fit w={a.w} size={36} mt={11} dy={2}>{a.label}</Fit>
            </Action>
          ))}
        </ActionGrid>
      </BottomBar>
    </Screen>
  );
}
